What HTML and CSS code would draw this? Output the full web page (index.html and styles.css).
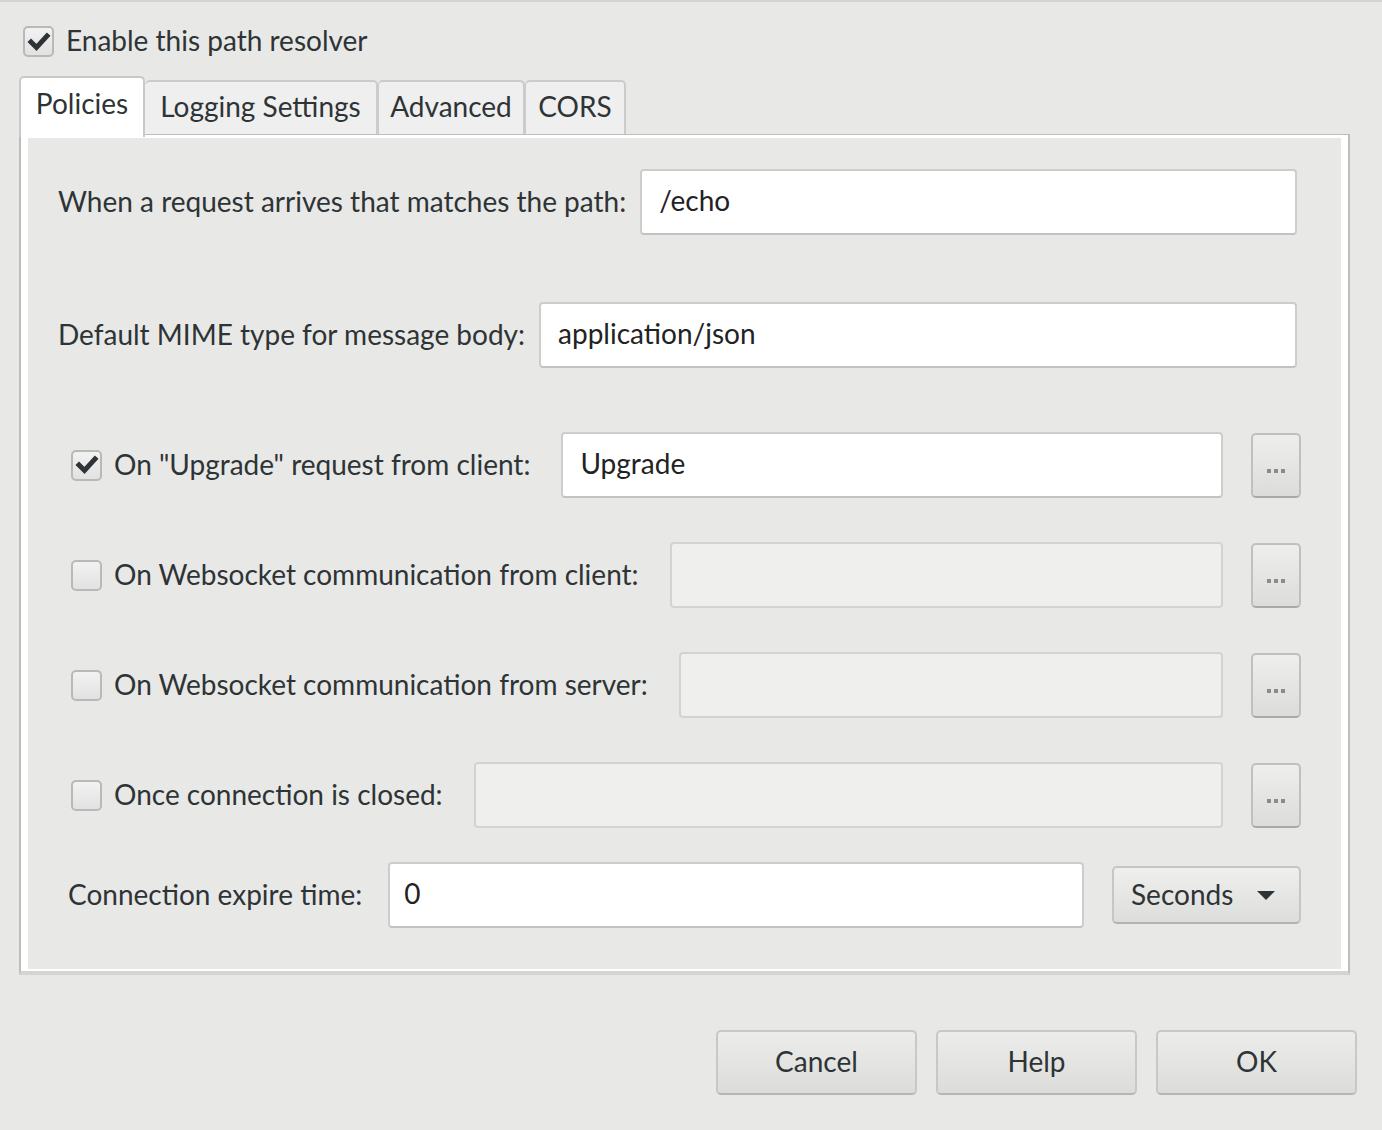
FILE: index.html
```html
<!DOCTYPE html>
<html>
<head>
<meta charset="utf-8">
<link rel="stylesheet" href="styles.css">
</head>
<body>
<div class="dialog">
  <label class="enable">
    <span class="cb checked"><svg viewBox="0 0 30 30" width="30" height="30"><path d="M7 15 L12.5 20.5 L23 9" fill="none" stroke="#2e3436" stroke-width="5" stroke-linecap="square" stroke-linejoin="miter"/></svg></span>
    <span class="enable-text">Enable this path resolver</span>
  </label>

  <div class="tabs">
    <div class="tab active">Policies</div>
    <div class="tab">Logging Settings</div>
    <div class="tab">Advanced</div>
    <div class="tab">CORS</div>
  </div>

  <div class="panel">
    <div class="panel-inner">
      <div class="row row-path">
        <span class="lbl">When a request arrives that matches the path:</span>
        <div class="input wide gap-s">/echo</div>
      </div>

      <div class="row row-mime">
        <span class="lbl">Default MIME type for message body:</span>
        <div class="input wide gap-s">application/json</div>
      </div>

      <div class="row row-cb row-upgrade">
        <span class="cb checked"><svg viewBox="0 0 30 30" width="30" height="30"><path d="M7 15 L12.5 20.5 L23 9" fill="none" stroke="#2e3436" stroke-width="5" stroke-linecap="square" stroke-linejoin="miter"/></svg></span>
        <span class="lbl cb-lbl">On "Upgrade" request from client:</span>
        <div class="input gap-l">Upgrade</div>
        <div class="dots-btn"><span></span><span></span><span></span></div>
      </div>

      <div class="row row-cb">
        <span class="cb"></span>
        <span class="lbl cb-lbl">On Websocket communication from client:</span>
        <div class="input disabled gap-l"></div>
        <div class="dots-btn"><span></span><span></span><span></span></div>
      </div>

      <div class="row row-cb">
        <span class="cb"></span>
        <span class="lbl cb-lbl">On Websocket communication from server:</span>
        <div class="input disabled gap-l"></div>
        <div class="dots-btn"><span></span><span></span><span></span></div>
      </div>

      <div class="row row-cb">
        <span class="cb"></span>
        <span class="lbl cb-lbl">Once connection is closed:</span>
        <div class="input disabled gap-l"></div>
        <div class="dots-btn"><span></span><span></span><span></span></div>
      </div>

      <div class="row row-expire">
        <span class="lbl">Connection expire time:</span>
        <div class="input expire">0</div>
        <div class="combo">
          <span>Seconds</span>
          <svg width="20" height="12" viewBox="0 0 20 12"><path d="M1 1 L19 1 L10 10 Z" fill="#2e3436"/></svg>
        </div>
      </div>
    </div>
  </div>

  <div class="actions">
    <div class="btn">Cancel</div>
    <div class="btn">Help</div>
    <div class="btn">OK</div>
  </div>
</div>
</body>
</html>
```

FILE: styles.css
```css
html, body {
  margin: 0;
  padding: 0;
  background: #e8e8e7;
}

body {
  font-family: Lato, "Liberation Sans", sans-serif;
  font-size: 28px;
  color: #2e3436;
  width: 1382px;
  height: 1130px;
  overflow: hidden;
  border-top: 2px solid #d4d4d3;
  box-sizing: border-box;
}

.dialog {
  padding: 24px 0 0 19px;
  width: 1363px;
  box-sizing: border-box;
}

.enable {
  display: flex;
  align-items: center;
  height: 31px;
  margin-left: 4px;
}

.cb {
  box-sizing: border-box;
  width: 31px;
  height: 31px;
  border: 2px solid #b9b9b8;
  border-radius: 5px;
  background: linear-gradient(#f2f2f2, #e2e2e2);
  display: inline-flex;
  align-items: center;
  justify-content: center;
  flex: none;
}

.cb svg {
  display: block;
  margin: -2px;
}

.enable-text {
  margin-left: 12px;
  line-height: 31px;
  margin-top: -2px;
}

.tabs {
  display: flex;
  align-items: flex-end;
  margin-top: 19px;
  height: 58px;
  position: relative;
  z-index: 1;
}

.tab {
  box-sizing: border-box;
  height: 54px;
  background: #efefef;
  border: 2px solid #cbcbca;
  border-bottom: none;
  border-left-width: 1px;
  border-radius: 5px 5px 0 0;
  display: flex;
  align-items: center;
  justify-content: center;
  line-height: 1;
  padding-bottom: 4px;
}

.tab.active {
  height: 61px;
  margin-bottom: -3px;
  background: #ffffff;
  border: 2px solid #c9c9c8;
  border-bottom: none;
  padding: 0 0 10px 0;
}

.tab:nth-child(2) { width: 233px; border-left: none; }
.tab:nth-child(3) { width: 147px; }
.tab:nth-child(4) { width: 101px; border-right-width: 2px; }
.tab.active { width: 126px; }

.panel {
  box-sizing: border-box;
  width: 1331px;
  height: 841px;
  border: 2px solid #bdbdbc;
  border-top-width: 1px;
  border-bottom: 4px solid #d4d4d3;
  background: #ffffff;
  padding: 3px 7px 2px 7px;
}

.panel-inner {
  background: #e8e8e7;
  height: 100%;
  box-sizing: border-box;
  padding: 31px 44px 0 30px;
}

.row {
  display: flex;
  align-items: center;
  height: 66px;
}

.row-mime { margin-top: 67px; }
.row-upgrade { margin-top: 64px; }
.row-cb { padding-left: 13px; margin-right: -4px; }
.row-cb + .row-cb { margin-top: 44px; }
.row-expire { margin-top: 34px; padding-left: 10px; margin-right: -4px; }

.lbl {
  white-space: nowrap;
  flex: none;
  margin-top: -3px;
}

.cb-lbl { margin-left: 12px; }

.input {
  box-sizing: border-box;
  height: 66px;
  background: #ffffff;
  border: 2px solid #cdcdcc;
  border-bottom-color: #c2c2c1;
  border-radius: 4px;
  display: flex;
  align-items: center;
  padding-left: 17px;
  padding-bottom: 4px;
  flex: 1;
  min-width: 0;
  color: #1f2324;
}

.gap-s { margin-left: 14px; }
.gap-l { margin-left: 31px; }

.input.disabled {
  background: #efefee;
  border-color: #d3d3d2;
}

.input.expire {
  margin-left: 26px;
  padding-left: 14px;
}

.dots-btn {
  box-sizing: border-box;
  width: 50px;
  height: 65px;
  margin-left: 28px;
  border: 2px solid #c0c0bf;
  border-bottom-color: #a9a9a8;
  border-radius: 5px;
  background: linear-gradient(#eeeeed, #dcdcdb);
  display: flex;
  justify-content: center;
  align-items: flex-end;
  gap: 3px;
  padding-bottom: 23px;
  flex: none;
}

.dots-btn span {
  width: 4px;
  height: 4px;
  background: #8a8c8c;
}

.combo {
  box-sizing: border-box;
  width: 189px;
  height: 58px;
  margin-left: 28px;
  border: 2px solid #c6c6c5;
  border-bottom-color: #b2b2b1;
  border-radius: 5px;
  background: linear-gradient(#efefee, #dddddc);
  display: flex;
  align-items: center;
  padding-left: 17px;
  padding-bottom: 3px;
  flex: none;
}

.combo svg {
  margin-left: 23px;
  margin-top: 4px;
}

.actions {
  display: flex;
  justify-content: flex-end;
  gap: 19px;
  margin-top: 55px;
  margin-right: 6px;
}

.btn {
  box-sizing: border-box;
  width: 201px;
  height: 65px;
  border: 2px solid #c8c8c7;
  border-bottom-color: #b6b6b5;
  border-radius: 5px;
  background: linear-gradient(#ececeb, #dcdcdb);
  display: flex;
  align-items: center;
  justify-content: center;
  padding-bottom: 4px;
}
```
